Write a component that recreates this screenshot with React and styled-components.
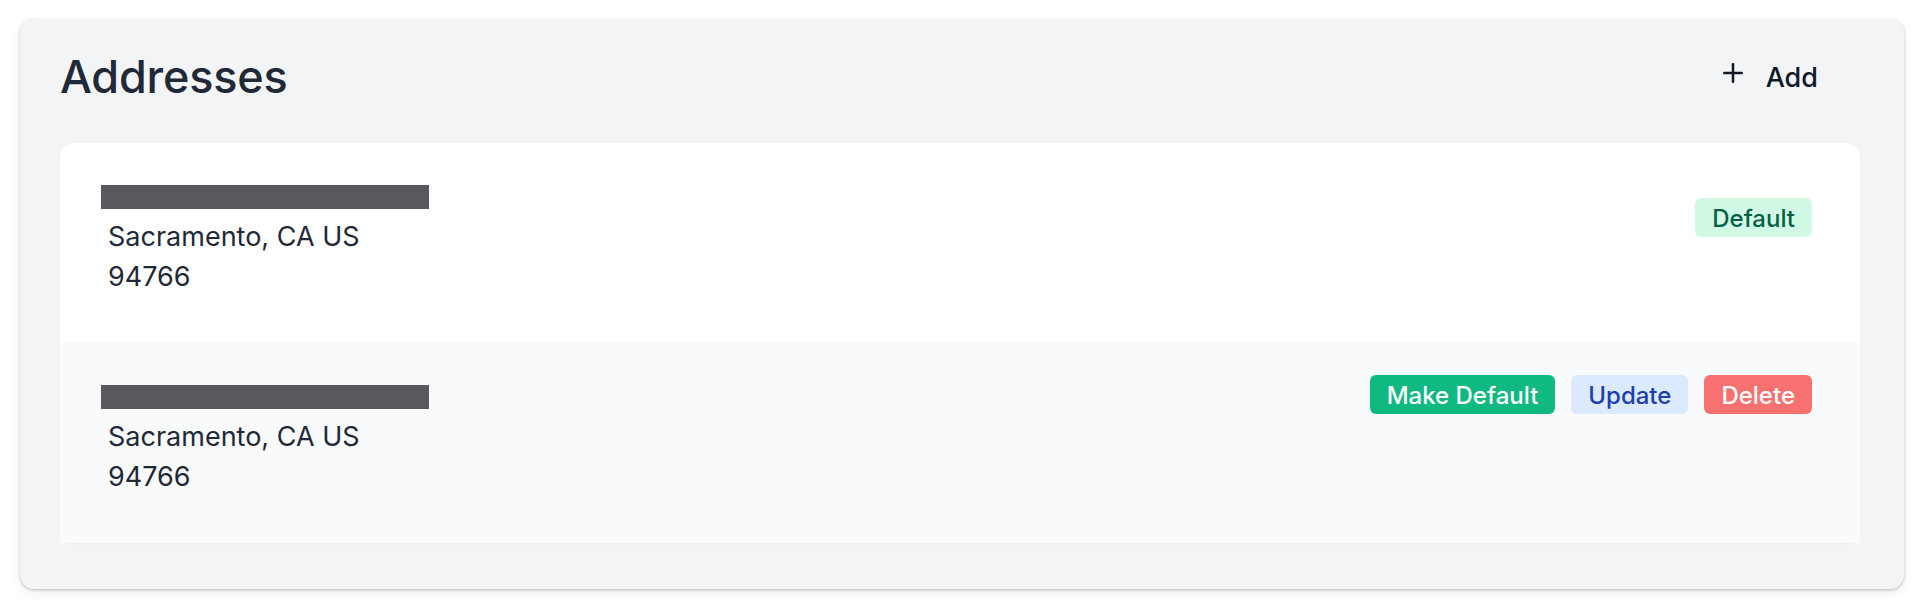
import React from 'react';
import styled, { createGlobalStyle } from 'styled-components';
import { Plus } from 'lucide-react';

const GlobalStyle = createGlobalStyle`
  * {
    box-sizing: border-box;
  }

  body {
    margin: 0;
    background: #ffffff;
    font-family: Inter, "Noto Sans", "Liberation Sans", sans-serif;
    color: #1f2937;
  }
`;

const Page = styled.div`
  padding: 19px 20px 20px 20px;
`;

const Card = styled.section`
  background: #f3f4f6;
  border-radius: 14px;
  padding: 31px 44px 46px 40px;
  box-shadow: 0 1px 3px rgba(0, 0, 0, 0.22), 0 4px 12px rgba(0, 0, 0, 0.07);
`;

const Header = styled.div`
  display: flex;
  align-items: center;
  justify-content: space-between;
  padding-right: 22px;
`;

const Title = styled.h1`
  margin: 0;
  font-size: 45px;
  line-height: 54px;
  font-weight: 500;
  color: #1f2937;
  letter-spacing: -0.2px;
`;

const AddButton = styled.button`
  display: flex;
  align-items: center;
  gap: 18px;
  background: none;
  border: none;
  padding: 8px 20px;
  font-family: inherit;
  font-size: 27px;
  line-height: 33px;
  font-weight: 500;
  color: #111827;
  cursor: pointer;

  svg {
    transform: translateY(-4px);
  }
`;

const List = styled.ul`
  list-style: none;
  margin: 39px 0 0 0;
  padding: 0;
  background: #ffffff;
  border-radius: 14px;
  box-shadow: 0 1px 2px rgba(0, 0, 0, 0.05);
`;

const Row = styled.li`
  display: flex;
  justify-content: space-between;
  align-items: flex-start;
  min-height: 200px;
  padding: 33px 48px 0 48px;
  background: ${ (p) => (p.$shaded ? '#f9fafb' : 'transparent') };
`;

const Address = styled.div`
  font-size: 27px;
  line-height: 40.5px;
  color: #1f2937;
`;

const Redacted = styled.div`
  width: 328px;
  height: 24px;
  margin: 9px 0 7.5px -7px;
  background: #59585e;
`;

const Actions = styled.div`
  display: flex;
  gap: 16px;
  margin-top: ${ (p) => p.$offset }px;
`;

const tones = {
  badge: { bg: '#d1fae5', fg: '#065f46' },
  green: { bg: '#10b981', fg: '#ffffff' },
  blue: { bg: '#dbeafe', fg: '#1e40af' },
  red: { bg: '#f87171', fg: '#ffffff' },
};

const Pill = styled.button`
  border: none;
  border-radius: 6px;
  padding: 6px 17px 4px 17px;
  font-family: inherit;
  font-size: 24px;
  line-height: 29px;
  font-weight: 500;
  background: ${ (p) => tones[p.$tone].bg };
  color: ${ (p) => tones[p.$tone].fg };
  cursor: ${ (p) => (p.$tone === 'badge' ? 'default' : 'pointer') };
`;

const addresses = [
  { id: 1, city: 'Sacramento, CA US', zip: '94766', isDefault: true },
  { id: 2, city: 'Sacramento, CA US', zip: '94766', isDefault: false },
];

const App = () => {
  return (
    <>
      <GlobalStyle />
      <Page>
        <Card>
          <Header>
            <Title>Addresses</Title>
            <AddButton>
              <Plus size={ 30 } strokeWidth={ 2 } />
              Add
            </AddButton>
          </Header>

          <List>
            { addresses.map((a, i) => (
              <Row key={ a.id } $shaded={ i % 2 === 1 }>
                <Address>
                  <Redacted />
                  <div>{ a.city }</div>
                  <div>{ a.zip }</div>
                </Address>

                { a.isDefault ? (
                  <Actions $offset={ 22 }>
                    <Pill as="span" $tone="badge">Default</Pill>
                  </Actions>
                ) : (
                  <Actions $offset={ -1 }>
                    <Pill $tone="green">Make Default</Pill>
                    <Pill $tone="blue">Update</Pill>
                    <Pill $tone="red">Delete</Pill>
                  </Actions>
                ) }
              </Row>
            )) }
          </List>
        </Card>
      </Page>
    </>
  );
};

export default App;
